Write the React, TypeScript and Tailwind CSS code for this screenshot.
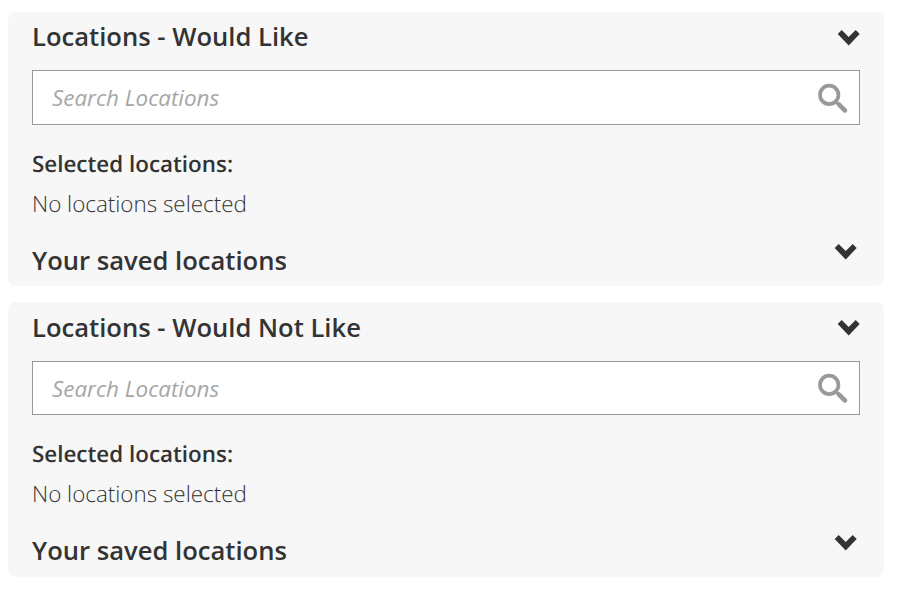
import React from 'react';
import { clsx } from 'clsx';

interface LocationPanelProps {
  title: string;
  className?: string;
}

function Chevron({ className }: { className?: string }) {
  return (
    <svg className={clsx('h-4 w-6 shrink-0', className)} viewBox="0 0 24 16" fill="#333333">
      <path d="M5.7 0.1 12.7 7.1 19.7 0.1 23.7 4.1 12.7 15.5 1.7 4.1Z" />
    </svg>
  );
}

function SearchIcon() {
  return (
    <svg className="mt-px size-8 shrink-0" viewBox="0 0 32 32" fill="none" stroke="#999999">
      <circle cx="12.2" cy="12.9" r="9.2" strokeWidth="3.7" />
      <path d="M18.6 19.2 21.5 22.1" strokeWidth="3" />
      <path d="M21.8 22.4 28 28.5" strokeWidth="4.6" strokeLinecap="round" />
    </svg>
  );
}

function LocationPanel({ title, className }: LocationPanelProps) {
  return (
    <section className={clsx('h-[274.4px] w-[876px] rounded-lg bg-[#f7f7f7] px-6', className)}>
      <button className="flex h-[58.2px] w-full items-start justify-between text-left">
        <h2 className="mt-[7.3px] text-[1.6rem] leading-9 font-semibold">{title}</h2>
        <Chevron className="mt-[17.8px]" />
      </button>

      <div className="flex h-[54.4px] items-center justify-between border border-[#999999] bg-white pr-2.5 pl-[19px]">
        <input
          className="mt-[1.8px] w-full text-[1.4rem] leading-8 italic outline-none placeholder:text-[#a6a6a6]"
          placeholder="Search Locations"
        />
        <SearchIcon />
      </div>

      <h3 className="mt-[23px] text-[1.4rem] leading-8 font-semibold">Selected locations:</h3>
      <p className="mt-2 text-[1.4rem] leading-8 font-light">No locations selected</p>

      <button className="mt-[22px] flex w-full items-start justify-between text-left">
        <h2 className="mt-px text-[1.6rem] leading-9 font-semibold">Your saved locations</h2>
        <Chevron className="mt-[2.6px] mr-[3px]" />
      </button>
    </section>
  );
}

export default function App() {
  return (
    <main className="flex h-[612px] flex-col gap-4 overflow-hidden bg-white px-2 pt-3 font-['Open_Sans',sans-serif] text-[#333333] antialiased [text-rendering:geometricPrecision]">
      <LocationPanel title="Locations - Would Like" />
      <LocationPanel title="Locations - Would Not Like" />
    </main>
  );
}
